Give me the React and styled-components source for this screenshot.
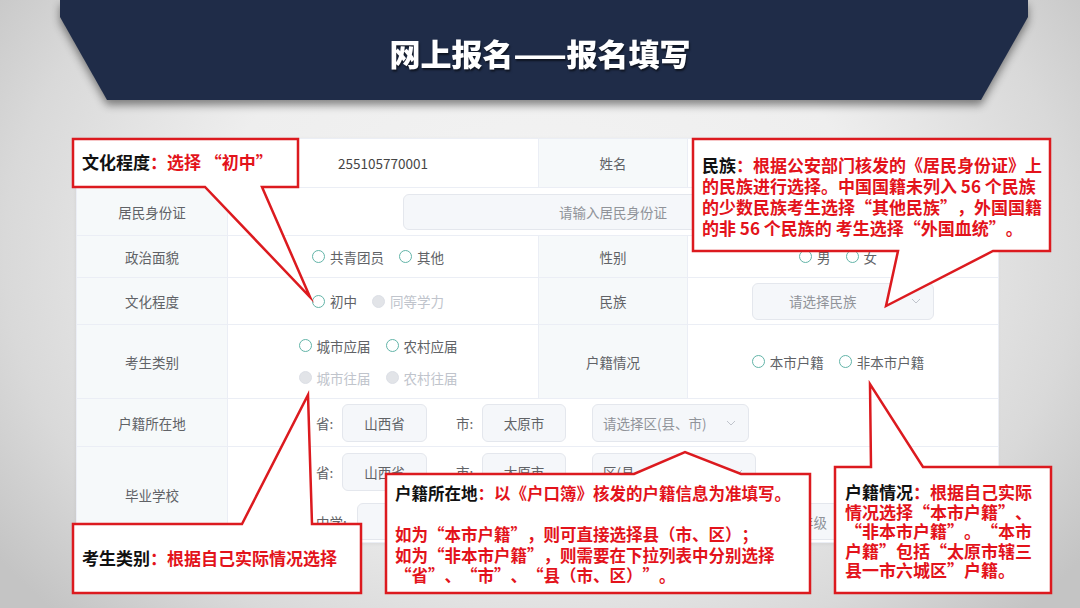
import React from 'react';
import styled, { createGlobalStyle } from 'styled-components';

const Global = createGlobalStyle`
  html, body { margin: 0; padding: 0; }
  body {
    width: 1080px; height: 608px; overflow: hidden;
    font-family: "Noto Sans CJK SC", "Noto Sans", sans-serif;
  }
`;

const Stage = styled.div`
  position: relative;
  width: 1080px;
  height: 608px;
  overflow: hidden;
  background: radial-gradient(ellipse 62% 85% at 50% 42%, #f4f4f4 0%, #eeeeee 50%, #d9d9d9 80%, #c4c4c4 100%);
`;

const HeaderWrap = styled.div`
  padding: 0 52px 0 60px;
  filter: drop-shadow(0 5px 4px rgba(0, 0, 0, 0.45));
`;

const Header = styled.header`
  height: 100px;
  background: #1f2c48;
  clip-path: polygon(0 0, 100% 0, 100% 17px, calc(100% - 47px) 100%, 47px 100%, 0 17px);
  display: flex;
  align-items: center;
  justify-content: center;
  padding: 4px 8px 0 0;
  box-sizing: border-box;
`;

const Title = styled.h1`
  margin: 0;
  color: #ffffff;
  font-size: 31px;
  font-weight: 900;
  letter-spacing: 0;
  text-shadow: 1px 2px 2px rgba(0, 0, 0, 0.55);
`;

const Panel = styled.div`
  margin: 38px 0 0 76px;
  width: 922px;
  display: grid;
  grid-template-columns: 151px 311px 149px 311px;
  grid-template-rows: 49px 48px 42px 47px 74px 48px 96px;
  background: #ffffff;
  border-top: 1px solid #ebeef5;
  border-left: 1px solid #ebeef5;
  box-shadow: 0 1px 4px rgba(0, 0, 0, 0.06);
  box-sizing: border-box;
`;

const LabelCell = styled.div`
  background: #f6f9fa;
  border-right: 1px solid #ebeef5;
  border-bottom: 1px solid #ebeef5;
  display: flex;
  align-items: center;
  justify-content: center;
  color: #606266;
  font-size: 13.5px;
`;

const ValueCell = styled.div`
  grid-column: span ${p => p.span || 1};
  border-right: 1px solid #ebeef5;
  border-bottom: 1px solid #ebeef5;
  display: flex;
  flex-direction: ${p => (p.column ? 'column' : 'row')};
  align-items: ${p => (p.column ? 'flex-start' : 'center')};
  justify-content: ${p => (p.start ? 'flex-start' : 'center')};
  padding-left: ${p => p.padLeft || 0}px;
  padding-right: ${p => p.padRight || 0}px;
  gap: ${p => p.gap || 0}px;
  color: #454545;
  font-size: 13.5px;
  box-sizing: border-box;
`;

const RadioGroup = styled.div`
  display: grid;
  grid-template-columns: repeat(2, auto);
  column-gap: 15px;
  row-gap: 12px;
`;

const RadioItem = styled.span`
  display: inline-flex;
  align-items: center;
  gap: 5px;
  font-size: 13.5px;
  line-height: 20px;
  color: ${p => (p.disabled ? '#c0c4cc' : '#606266')};
`;

const RadioDot = styled.span`
  width: 13px;
  height: 13px;
  border-radius: 50%;
  box-sizing: border-box;
  border: 1.4px solid ${p => (p.disabled ? '#dcdfe6' : '#62b4a8')};
  background: ${p => (p.disabled ? '#e2e4e8' : '#ffffff')};
`;

const Radio = ({ children, disabled }) => (
  <RadioItem disabled={disabled}>
    <RadioDot disabled={disabled} />
    {children}
  </RadioItem>
);

const FieldRow = styled.div`
  display: flex;
  align-items: center;
  margin-top: ${p => p.mt || 0}px;
`;

const FieldLabel = styled.span`
  color: #606266;
  font-size: 13.5px;
  width: ${p => p.w || 26}px;
  margin-left: ${p => p.ml || 0}px;
`;

const Field = styled.div`
  width: ${p => p.w}px;
  height: ${p => p.h || 38}px;
  margin-left: ${p => p.ml || 0}px;
  box-sizing: border-box;
  background: #f5f7fa;
  border: 1px solid #e4e7ed;
  border-radius: 6px;
  display: flex;
  align-items: center;
  justify-content: ${p => (p.center ? 'center' : p.end ? 'flex-end' : 'space-between')};
  padding: 0 ${p => (p.center ? 0 : 12)}px 0 ${p => (p.center ? 0 : 10)}px;
  color: ${p => (p.placeholder ? '#909399' : '#606266')};
  font-size: 13.5px;
  white-space: nowrap;
`;

const SelectText = styled.span`
  padding-left: ${p => p.pl || 0}px;
`;

const Chevron = () => (
  <svg width="10" height="6" viewBox="0 0 10 6">
    <polyline points="1,1 5,5 9,1" fill="none" stroke="#c0c4cc" strokeWidth="1" />
  </svg>
);

const CalloutBox = styled.div`
  position: absolute;
  left: ${p => p.x}px;
  top: ${p => p.y}px;
  width: ${p => p.w}px;
  height: ${p => p.h}px;
  box-sizing: border-box;
  padding: ${p => p.pad};
  font-weight: 700;
  font-size: ${p => p.fs}px;
  line-height: ${p => p.lh}px;
  color: #e3131b;
  white-space: nowrap;
  text-spacing-trim: space-all;
  z-index: 5;
`;

const CalloutShape = styled.svg`
  position: absolute;
  left: 0;
  top: 0;
  overflow: visible;
`;

const CalloutText = styled.div`
  position: relative;
`;

const Key = styled.span`
  display: inline-block;
  color: #111111;
`;

const Q = styled.span`
  display: inline-block;
  font-feature-settings: "fwid";
`;

const Callout = ({ x, y, w, h, d, pad, fs = 17, lh = 21, children }) => (
  <CalloutBox x={x} y={y} w={w} h={h} pad={pad} fs={fs} lh={lh}>
    <CalloutShape width={w} height={h}>
      <path d={d} fill="#ffffff" stroke="#dc1a1f" strokeWidth="2.5" strokeLinejoin="miter" strokeMiterlimit="20" />
    </CalloutShape>
    <CalloutText>{children}</CalloutText>
  </CalloutBox>
);

export default function App() {
  return (
    <Stage>
      <Global />
      <HeaderWrap>
        <Header>
          <Title>网上报名——报名填写</Title>
        </Header>
      </HeaderWrap>

      <Panel>
        <LabelCell />
        <ValueCell>255105770001</ValueCell>
        <LabelCell>姓名</LabelCell>
        <ValueCell />

        <LabelCell>居民身份证</LabelCell>
        <ValueCell span={3}>
          <Field w={421} h={36} center placeholder>请输入居民身份证</Field>
        </ValueCell>

        <LabelCell>政治面貌</LabelCell>
        <ValueCell padRight={10}>
          <RadioGroup>
            <Radio>共青团员</Radio>
            <Radio>其他</Radio>
          </RadioGroup>
        </ValueCell>
        <LabelCell>性别</LabelCell>
        <ValueCell padRight={10}>
          <RadioGroup>
            <Radio>男</Radio>
            <Radio>女</Radio>
          </RadioGroup>
        </ValueCell>

        <LabelCell>文化程度</LabelCell>
        <ValueCell padRight={10}>
          <RadioGroup>
            <Radio>初中</Radio>
            <Radio disabled>同等学力</Radio>
          </RadioGroup>
        </ValueCell>
        <LabelCell>民族</LabelCell>
        <ValueCell>
          <Field w={182} h={37} placeholder>
            <SelectText pl={26}>请选择民族</SelectText>
            <Chevron />
          </Field>
        </ValueCell>

        <LabelCell>考生类别</LabelCell>
        <ValueCell padRight={10}>
          <RadioGroup>
            <Radio>城市应届</Radio>
            <Radio>农村应届</Radio>
            <Radio disabled>城市往届</Radio>
            <Radio disabled>农村往届</Radio>
          </RadioGroup>
        </ValueCell>
        <LabelCell>户籍情况</LabelCell>
        <ValueCell padRight={10}>
          <RadioGroup>
            <Radio>本市户籍</Radio>
            <Radio>非本市户籍</Radio>
          </RadioGroup>
        </ValueCell>

        <LabelCell>户籍所在地</LabelCell>
        <ValueCell span={3} start padLeft={88}>
          <FieldRow>
            <FieldLabel>省:</FieldLabel>
            <Field w={85} center>山西省</Field>
            <FieldLabel ml={29}>市:</FieldLabel>
            <Field w={84} center>太原市</Field>
            <Field w={157} ml={26} placeholder>请选择区(县、市)<Chevron /></Field>
          </FieldRow>
        </ValueCell>

        <LabelCell>毕业学校</LabelCell>
        <ValueCell span={3} start column padLeft={88} gap={12}>
          <FieldRow mt={6}>
            <FieldLabel>省:</FieldLabel>
            <Field w={85} center>山西省</Field>
            <FieldLabel ml={29}>市:</FieldLabel>
            <Field w={84} center>太原市</Field>
            <Field w={164} ml={26}>区(县、市)<Chevron /></Field>
          </FieldRow>
          <FieldRow>
            <FieldLabel w={41}>中学:</FieldLabel>
            <Field w={483} h={37} end placeholder>年级</Field>
          </FieldRow>
        </ValueCell>
      </Panel>

      <Callout x={73} y={139} w={225} h={48} pad="11px 0 0 9px" fs={17} lh={24}
        d="M0,0 H225 V48 H189 L237,158 L132,48 H0 Z">
        <Key>文化程度</Key>：选择 <Q>“</Q>初中<Q>”</Q>
      </Callout>

      <Callout x={693} y={139} w={357} h={112} pad="15px 0 0 9px" fs={17} lh={21}
        d="M0,0 H357 V112 H300 L193,167 L205,112 H0 Z">
        <Key>民族</Key>：根据公安部门核发的《居民身份证》上<br />
        的民族进行选择。中国国籍未列入 56 个民族<br />
        的少数民族考生选择<Q>“</Q>其他民族<Q>”</Q>，外国国籍<br />
        的非 56 个民族的 考生选择<Q>“</Q>外国血统<Q>”</Q>。
      </Callout>

      <Callout x={73} y={524} w={288} h={69} pad="22px 0 0 9px" fs={17} lh={24}
        d="M0,0 H169 L235,-129 L239,0 H288 V69 H0 Z">
        <Key>考生类别</Key>：根据自己实际情况选择
      </Callout>

      <Callout x={386} y={474} w={424} h={119} pad="9px 0 0 9px" fs={16.5} lh={20.5}
        d="M0,0 H248 L299,-22 L355,0 H424 V119 H0 Z">
        <Key>户籍所在地</Key>：以《户口簿》核发的户籍信息为准填写。<br />
        <br />
        如为<Q>“</Q>本市户籍<Q>”</Q>，则可直接选择县（市、区）；<br />
        如为<Q>“</Q>非本市户籍<Q>”</Q>，则需要在下拉列表中分别选择<br />
        <Q>“</Q>省<Q>”</Q>、<Q>“</Q>市<Q>”</Q>、<Q>“</Q>县（市、区）<Q>”</Q>。
      </Callout>

      <Callout x={835} y={467} w={216} h={126} pad="15px 0 0 10px" fs={17} lh={19.5}
        d="M0,0 H36 L35,-83 L88,0 H216 V126 H0 Z">
        <Key>户籍情况</Key>：根据自己实际<br />
        情况选择<Q>“</Q>本市户籍<Q>”</Q>、<br />
        <Q>“</Q>非本市户籍<Q>”</Q>。<Q>“</Q>本市<br />
        户籍<Q>”</Q>包括<Q>“</Q>太原市辖三<br />
        县一市六城区<Q>”</Q>户籍。
      </Callout>
    </Stage>
  );
}
